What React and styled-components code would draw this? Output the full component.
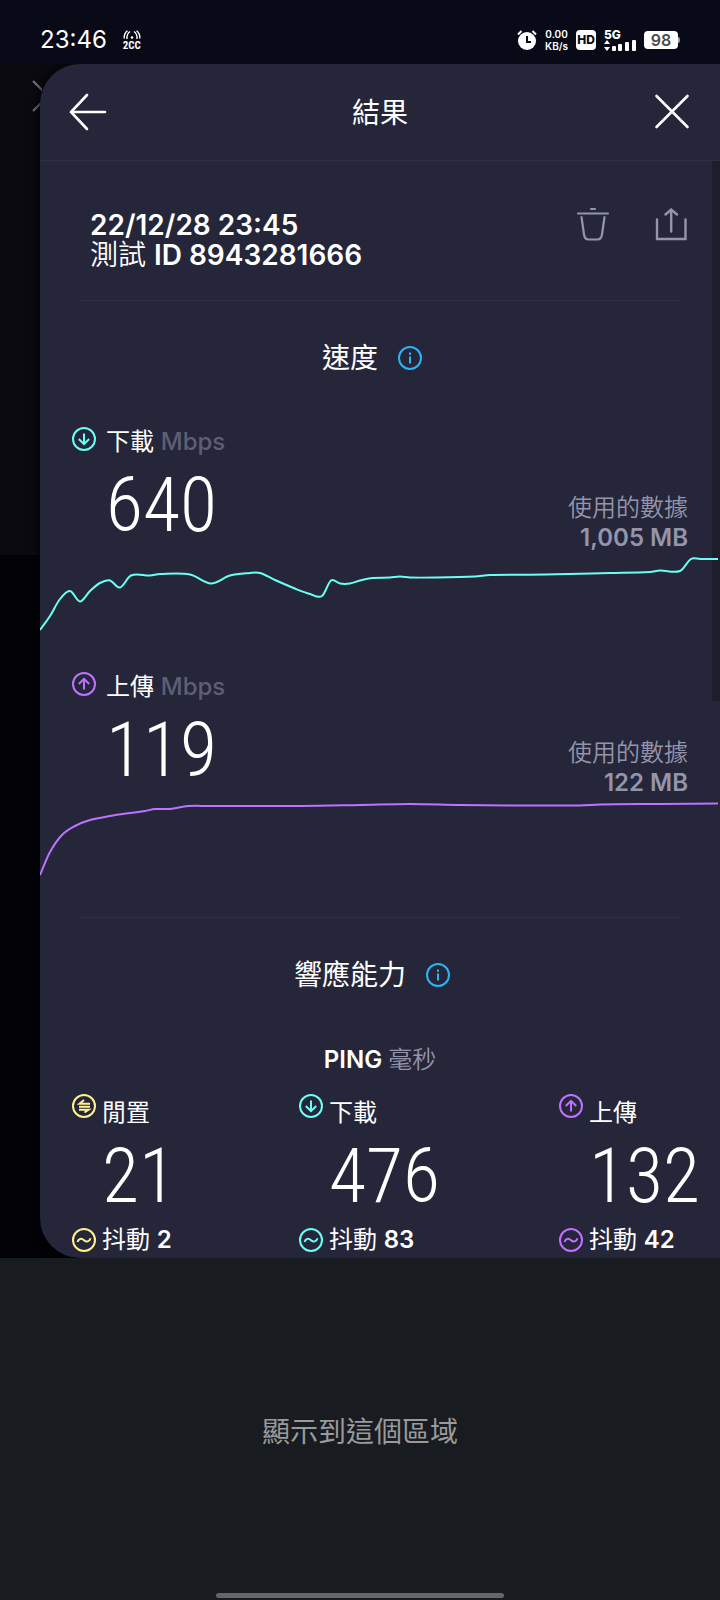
import styled, { createGlobalStyle } from 'styled-components'

const sans = `Inter, 'Noto Sans CJK TC', sans-serif`
const narrow = `'Roboto Condensed', 'Liberation Sans Narrow', 'DejaVu Sans Condensed', sans-serif`

const colors = {
  sheet: '#252639',
  line: '#2f3044',
  muted: '#9495ab',
  faint: '#5e5f74',
  teal: '#6afff3',
  purple: '#bf71ff',
  yellow: '#fff38e',
  blue: '#2cb4f5',
}

const downloadPoints = [
  [0, 77], [10, 63], [20, 46], [30, 38], [40, 48.5], [50, 38], [60, 30], [70, 27.5],
  [80, 34.5], [91, 22.5], [110, 22.5], [120, 21], [150, 21.5], [171, 30.5], [190, 22.5],
  [210, 20], [220, 20], [235, 27], [256, 36], [270, 41], [282, 43], [291, 27.5],
  [300, 30.5], [310, 30.5], [320, 27.5], [333, 25], [350, 24.5], [360, 23.5], [370, 24.5],
  [395, 24.5], [435, 23.5], [450, 22], [505, 21.5], [570, 20], [610, 19], [620, 17.5],
  [640, 18], [651, 6], [660, 6], [678, 6],
]

const uploadPoints = [
  [0, 77], [10, 54], [22, 37], [35, 28], [50, 22], [70, 18], [90, 15], [105, 13],
  [115, 11], [130, 11], [148, 8], [170, 8], [260, 8], [320, 7], [370, 6],
  [420, 7], [480, 7.5], [540, 7.5], [560, 6.5], [620, 6], [678, 5.5],
]

// Smooth line through the samples, the slope at each one follows its neighbours
const toPath = (points) => {
  let d = `M${points[0][0]} ${points[0][1]}`

  for (let i = 0; i < points.length - 1; i++) {
    const before = points[i - 1] || points[i]
    const from = points[i]
    const to = points[i + 1]
    const after = points[i + 2] || to
    const dx = (to[0] - from[0]) / 3
    const slopeFrom = (to[1] - before[1]) / (to[0] - before[0])
    const slopeTo = (after[1] - from[1]) / (after[0] - from[0])

    d += `C${from[0] + dx} ${from[1] + dx * slopeFrom} ${to[0] - dx} ${to[1] - dx * slopeTo} ${to[0]} ${to[1]}`
  }

  return d
}

const GlobalStyle = createGlobalStyle`
  *, *::before, *::after {
    box-sizing: border-box;
  }

  body {
    margin: 0;
    background: #181c20;
    color: #fff;
    font-family: ${sans};
  }

  h1, h2, h3, p {
    margin: 0;
    font-weight: 400;
  }
`

const Screen = styled.div`
  display: flex;
  flex-direction: column;
  min-height: 100vh;
`

const StatusBar = styled.header`
  display: flex;
  align-items: flex-end;
  justify-content: space-between;
  height: 64px;
  padding: 0 42px 12px 40px;
  background: #080a18;
`

const StatusGroup = styled.div`
  display: flex;
  align-items: center;
  gap: ${({ $gap }) => $gap}px;
  height: 24px;
`

const Clock = styled.time`
  font-size: 24px;
  line-height: 24px;
`

const Stack = styled.div`
  display: flex;
  flex-direction: column;
  align-items: ${({ $align }) => $align || 'center'};
`

const TinyText = styled.span`
  font-family: ${({ $narrow }) => ($narrow ? narrow : sans)};
  font-size: ${({ $size }) => $size || 10}px;
  font-weight: ${({ $weight }) => $weight || 600};
  line-height: ${({ $line }) => $line || 12}px;
`

const HdBadge = styled.span`
  width: 20px;
  height: 20px;
  border-radius: 4px;
  background: #fff;
  color: #080a18;
  font-size: 12px;
  font-weight: 800;
  line-height: 20px;
  text-align: center;
`

const Battery = styled.span`
  position: relative;
  width: 34px;
  height: 18px;
  border-radius: 4px;
  background: #fff;
  color: #4a4b52;
  font-size: 16px;
  font-weight: 600;
  line-height: 18px;
  text-align: center;

  &::after {
    content: '';
    position: absolute;
    top: 6px;
    right: -2px;
    width: 2px;
    height: 6px;
    border-radius: 0 2px 2px 0;
    background: #9b9ca4;
  }
`

const Backdrop = styled.div`
  position: relative;
  padding-left: 40px;
  background: linear-gradient(#0a0a10 491px, #020207 491px);
`

const HiddenClose = styled.svg`
  position: absolute;
  top: 16px;
  left: 8px;
`

const Sheet = styled.main`
  position: relative;
  padding-bottom: 3px;
  border-radius: 40px 0 0 40px;
  background: ${colors.sheet};
  box-shadow: 0 0 12px #000;
  clip-path: inset(0 0 0 -40px);
`

const SheetHeader = styled.div`
  display: flex;
  align-items: center;
  justify-content: space-between;
  height: 97px;
  padding: 0 28px;
  border-bottom: 1px solid ${colors.line};
`

const IconButton = styled.button`
  display: flex;
  padding: 0;
  border: 0;
  background: none;
  color: ${({ $color }) => $color || '#fff'};
  cursor: pointer;
`

const Title = styled.h1`
  padding-top: 2px;
  font-size: 28px;
  line-height: 40px;
`

const ScrollTrack = styled.div`
  position: absolute;
  top: 97px;
  right: 0;
  width: 8px;
  height: 540px;
  background: #1e1d2b;
`

const TestInfo = styled.section`
  display: flex;
  justify-content: space-between;
  height: 140px;
  margin: 0 40px;
  padding: 46px 0 0 10px;
  border-bottom: 1px solid ${colors.line};
`

const TestText = styled.div`
  padding-top: 3px;
  font-size: 28px;
  line-height: 30px;
`

const Light = styled.span`
  font-weight: 350;
`

const Actions = styled.div`
  display: flex;
  align-items: flex-start;
  gap: 44px;
  margin-right: -7px;
`

const Section = styled.section`
  & + & {
    padding-top: 4px;
  }
`

const SectionTitle = styled.div`
  display: flex;
  align-items: center;
  justify-content: center;
  gap: 20px;
  height: 114px;
  margin: 0 40px 8px;
  padding-right: 16px;
  border-top: ${({ $ruled }) => ($ruled ? `1px solid ${colors.line}` : '0')};
`

const SectionName = styled.h2`
  font-size: 28px;
  line-height: 40px;
`

const SpeedBlock = styled.article`
  padding-bottom: 35px;
`

const SpeedHead = styled.div`
  display: flex;
  align-items: flex-end;
  justify-content: space-between;
  height: 130px;
  padding: 0 32px;
`

const SpeedMain = styled.div`
  align-self: flex-start;
`

const SpeedLabel = styled.h3`
  display: flex;
  align-items: flex-start;
  gap: 10px;
  font-size: 24px;
  line-height: 38px;

  svg {
    margin-top: 4px;
  }
`

const Unit = styled.span`
  color: ${({ $faint }) => ($faint ? colors.faint : colors.muted)};
  font-weight: ${({ $faint }) => ($faint ? 500 : 350)};
`

const BigNumber = styled.p`
  padding-left: ${({ $inset }) => $inset}px;
  font-family: ${narrow};
  font-size: 76px;
  font-weight: 350;
  line-height: 88px;
`

const Usage = styled.p`
  color: ${colors.muted};
  font-size: 24px;
  font-weight: ${({ $strong }) => ($strong ? 600 : 350)};
  line-height: 30px;
  text-align: right;
`

const Chart = styled.svg`
  position: relative;
  z-index: 1;
  display: block;
  width: 100%;
  height: 80px;
`

const PingTitle = styled.h3`
  padding-top: 6px;
  margin-bottom: 19px;
  font-size: 24px;
  font-weight: 600;
  line-height: 30px;
  text-align: center;
`

const PingGrid = styled.div`
  display: grid;
  grid-template-columns: minmax(0, 227fr) minmax(0, 260fr) minmax(0, 129fr);
  padding: 0 32px;
`

const PingLabel = styled.h3`
  display: flex;
  align-items: flex-start;
  gap: 6px;
  font-size: 24px;
  line-height: 38px;
`

const Jitter = styled.p`
  display: flex;
  align-items: center;
  gap: 6px;
  margin-top: 5px;
  font-size: 24px;
  line-height: 30px;
  white-space: nowrap;
`

const Strong = styled.span`
  font-weight: 600;
`

const ShowArea = styled.footer`
  display: flex;
  flex: 1;
  flex-direction: column;
  align-items: center;
  justify-content: space-between;
  padding: 154px 0 2px;
  background: #181c20;
`

const ShowText = styled.p`
  color: #989a9c;
  font-size: 28px;
  line-height: 40px;
`

const HomeBar = styled.div`
  width: 40%;
  height: 5px;
  border-radius: 3px;
  background: #646769;
`

const ringMarks = {
  down: <path d='M12 6.500v10.500M6.800 12l5.200 5.200 5.200-5.200' />,
  up: <path d='M12 17.500V7M6.800 12L12 6.800l5.200 5.200' />,
  idle: <path d='M18 9.800H7.500l4.500-3.800M7 12.800h11M7 15.800h9.500l-4 2.700' />,
  jitter: <path d='M5.500 14c1-3.600 4-4 6.500-1.800s5.400 1.600 6.500-2' />,
  info: <path d='M12 10.500v7M12 6.500v2.200' />,
}

const RingIcon = ({ mark, color }) => (
  <svg width='24' height='24' viewBox='0 0 24 24' fill='none' stroke={color} strokeWidth='2' aria-hidden='true'>
    <circle cx='12' cy='12' r='11' />
    {ringMarks[mark]}
  </svg>
)

const Speed = ({ mark, color, label, value, usage, points }) => (
  <SpeedBlock>
    <SpeedHead>
      <SpeedMain>
        <SpeedLabel>
          <RingIcon mark={mark} color={color} />
          <span>{label} <Unit $faint>Mbps</Unit></span>
        </SpeedLabel>
        <BigNumber $inset={34}>{value}</BigNumber>
      </SpeedMain>
      <div>
        <Usage>使用的數據</Usage>
        <Usage $strong>{usage}</Usage>
      </div>
    </SpeedHead>
    <Chart viewBox='0 0 680 80' preserveAspectRatio='none' fill='none' aria-hidden='true'>
      <path d={toPath(points)} stroke={color} strokeWidth='2' />
    </Chart>
  </SpeedBlock>
)

const Ping = ({ mark, color, label, value, jitter }) => (
  <div>
    <PingLabel>
      <RingIcon mark={mark} color={color} />
      {label}
    </PingLabel>
    <BigNumber $inset={30}>{value}</BigNumber>
    <Jitter>
      <RingIcon mark='jitter' color={color} />
      <span>抖動 <Strong>{jitter}</Strong></span>
    </Jitter>
  </div>
)

const Status = () => (
  <StatusBar>
    <StatusGroup $gap={16}>
      <Clock>23:46</Clock>
      <Stack>
        <svg width='18' height='10' viewBox='0 0 18 10' fill='none' stroke='#fff' strokeWidth='1.400'>
          <path d='M4 9Q3.500 4 7 1.500M1.200 8.500Q.8 3.500 4.500 .8M14 9Q14.500 4 11 1.500M16.800 8.500Q17.200 3.500 13.500 .8' />
          <circle cx='9' cy='7.500' r='1.300' fill='#fff' stroke='none' />
        </svg>
        <TinyText $narrow $size={11} $weight={700} $line={11}>2CC</TinyText>
      </Stack>
    </StatusGroup>
    <StatusGroup $gap={8}>
      <svg width='20' height='20' viewBox='0 0 20 20' fill='none' stroke='#fff' strokeWidth='2'>
        <circle cx='10' cy='11' r='9' fill='#fff' stroke='none' />
        <path d='M1 4.500L4.500 1M19 4.500L15.500 1' />
        <path d='M10 6v6h4' stroke='#080a18' />
      </svg>
      <Stack>
        <TinyText>0.00</TinyText>
        <TinyText>KB/s</TinyText>
      </Stack>
      <HdBadge>HD</HdBadge>
      <Stack $align='flex-start'>
        <TinyText $size={12} $weight={800} $line={10}>5G</TinyText>
        <svg width='32' height='11' viewBox='0 0 32 11' fill='#fff'>
          <path d='M0 4L3 0l3 4zM0 7h6l-3 4z' />
          <rect x='8' y='6' width='4' height='5' rx='1' />
          <rect x='14' y='4' width='4' height='7' rx='1' />
          <rect x='21' y='2' width='4' height='9' rx='1' />
          <rect x='28' y='0' width='4' height='11' rx='1' />
        </svg>
      </Stack>
      <Battery>98</Battery>
    </StatusGroup>
  </StatusBar>
)

const App = () => (
  <Screen>
    <GlobalStyle />
    <Status />

    <Backdrop>
      <HiddenClose width='34' height='34' viewBox='0 0 34 34' stroke='#77777a' strokeWidth='2' aria-hidden='true'>
        <path d='M25 1l16 16M25 31l16-16' />
      </HiddenClose>
      <Sheet>
        <SheetHeader>
          <IconButton type='button' aria-label='返回'>
            <svg width='40' height='40' viewBox='0 0 40 40' fill='none' stroke='currentColor' strokeWidth='2.600' strokeLinecap='round'>
              <path d='M37 20H3M19 3L3 20l16 17' />
            </svg>
          </IconButton>
          <Title>結果</Title>
          <IconButton type='button' aria-label='關閉'>
            <svg width='40' height='40' viewBox='0 0 40 40' fill='none' stroke='currentColor' strokeWidth='2.600' strokeLinecap='round'>
              <path d='M4.500 4l31 31M35.500 4l-31 31' />
            </svg>
          </IconButton>
        </SheetHeader>
        <ScrollTrack />

        <TestInfo>
          <TestText>
            <p><Strong>22/12/28 23:45</Strong></p>
            <p><Light>測試</Light> <Strong>ID 8943281666</Strong></p>
          </TestText>
          <Actions>
            <IconButton type='button' aria-label='刪除' $color={colors.muted}>
              <svg width='36' height='34' viewBox='0 0 36 34' fill='none' stroke='currentColor' strokeWidth='2.200' strokeLinecap='round' strokeLinejoin='round'>
                <path d='M3 6.500h30M16 2h4M6.500 10l2.500 17.500q.7 5 4.500 5h9q3.800 0 4.500-5l2.500-17.500' />
              </svg>
            </IconButton>
            <IconButton type='button' aria-label='分享' $color={colors.muted}>
              <svg width='32' height='34' viewBox='0 0 32 34' fill='none' stroke='currentColor' strokeWidth='2.400' strokeLinecap='round'>
                <path d='M2 12.500V32h28.500V12.500M16.200 24.500V2.500M10.500 7.500l5.700-5 5.800 5' />
              </svg>
            </IconButton>
          </Actions>
        </TestInfo>

        <Section>
          <SectionTitle>
            <SectionName>速度</SectionName>
            <IconButton type='button' aria-label='速度說明'>
              <RingIcon mark='info' color={colors.blue} />
            </IconButton>
          </SectionTitle>
          <Speed mark='down' color={colors.teal} label='下載' value='640' usage='1,005 MB' points={downloadPoints} />
          <Speed mark='up' color={colors.purple} label='上傳' value='119' usage='122 MB' points={uploadPoints} />
        </Section>

        <Section>
          <SectionTitle $ruled>
            <SectionName>響應能力</SectionName>
            <IconButton type='button' aria-label='響應能力說明'>
              <RingIcon mark='info' color={colors.blue} />
            </IconButton>
          </SectionTitle>
          <PingTitle>PING <Unit>毫秒</Unit></PingTitle>
          <PingGrid>
            <Ping mark='idle' color={colors.yellow} label='閒置' value='21' jitter='2' />
            <Ping mark='down' color={colors.teal} label='下載' value='476' jitter='83' />
            <Ping mark='up' color={colors.purple} label='上傳' value='132' jitter='42' />
          </PingGrid>
        </Section>
      </Sheet>
    </Backdrop>

    <ShowArea>
      <ShowText>顯示到這個區域</ShowText>
      <HomeBar />
    </ShowArea>
  </Screen>
)

export default App
